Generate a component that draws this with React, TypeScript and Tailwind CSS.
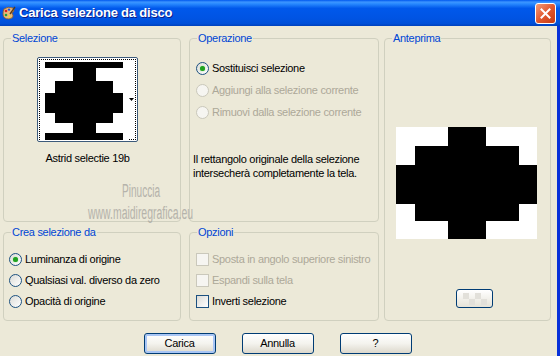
import React from 'react';

interface OptionProps {
  label: string;
  checked?: boolean;
  disabled?: boolean;
}

const Radio: React.FC<OptionProps> = ({ label, checked, disabled }) => (
  <div className="flex h-[21px] items-center gap-[3px] whitespace-nowrap">
    <span
      className={
        disabled
          ? 'flex h-[13px] w-[13px] shrink-0 items-center justify-center rounded-full border border-[#CAC8BB] bg-[#F6F5F1]'
          : 'flex h-[13px] w-[13px] shrink-0 items-center justify-center rounded-full border border-[#1C5180] bg-linear-to-br from-[#DCDCD7] to-white'
      }
    >
      {checked && <span className="h-[5px] w-[5px] rounded-full bg-[#21A121] shadow-[0_0_1px_#55D555]" />}
    </span>
    <span className={disabled ? 'text-[#ACA899]' : 'text-black'}>{label}</span>
  </div>
);

const Check: React.FC<OptionProps> = ({ label, disabled }) => (
  <div className="flex h-[21px] items-center gap-[3px] whitespace-nowrap">
    <span
      className={
        disabled
          ? 'h-[13px] w-[13px] shrink-0 border border-[#CAC8BB] bg-[#F6F5F1]'
          : 'h-[13px] w-[13px] shrink-0 border border-[#1C5180] bg-linear-to-br from-[#DCDCD7] to-white'
      }
    />
    <span className={disabled ? 'text-[#ACA899]' : 'text-black'}>{label}</span>
  </div>
);

const Group: React.FC<{ title: string; className?: string; children?: React.ReactNode }> = ({
  title,
  className = '',
  children,
}) => (
  <fieldset className={`min-w-0 rounded-[4px] border border-[#D0D0BF] ${className}`}>
    <legend className="ml-[7px] px-[1px] text-[11px] leading-[13px] text-[#0046D5]">{title}</legend>
    {children}
  </fieldset>
);

const XpButton: React.FC<{ label: string; focused?: boolean }> = ({ label, focused }) => (
  <button
    className={`h-[21px] w-[72px] rounded-[3px] border border-[#003C74] bg-linear-to-b from-white via-[#F4F3EE] to-[#DCD8CC] text-[11px] text-black ${
      focused ? 'shadow-[inset_0_0_0_2px_#A9C6F5]' : ''
    }`}
  >
    {label}
  </button>
);

export default function App() {
  return (
    <div className="h-[356px] w-[560px] overflow-hidden font-['Liberation_Sans',Arial,sans-serif] text-[11px] leading-[13px] tracking-[-0.3px]">
      {/* barra del titolo */}
      <div className="flex h-[26px] bg-[linear-gradient(to_bottom,#0058EE_0%,#3D95FF_8%,#2A8BFF_14%,#0058EB_32%,#0054E3_70%,#0050D9_90%,#0041BC_100%)]">
        <svg className="ml-[2px] mt-[6px] h-[14px] w-[14px]" viewBox="0 0 14 14">
          <path d="M2 3 Q6 0 11 2 Q13 4 11 6 Q9 7 11 9 Q12 12 7 13 Q1 13 1 8 Q1 5 2 3Z" fill="#E8B878" stroke="#8A5A2A" strokeWidth="0.8" />
          <circle cx="4" cy="5" r="1.3" fill="#E02020" />
          <circle cx="7" cy="3.6" r="1.2" fill="#2050E0" />
          <circle cx="4" cy="9" r="1.3" fill="#20A040" />
          <circle cx="7.5" cy="10.5" r="1.1" fill="#F0E020" />
          <path d="M13 1 L8 8" stroke="#5A3A1A" strokeWidth="1.3" />
        </svg>
        <span className="ml-[3px] mt-[6px] text-[13px] font-bold leading-[14px] tracking-[-0.2px] text-white [text-shadow:1px_1px_0_#0A1E8C]">
          Carica selezione da disco
        </span>
        <div className="ml-auto mr-[4px] mt-[3px] flex h-[21px] w-[21px] items-center justify-center rounded-[3px] border border-white bg-linear-to-br from-[#F09A78] via-[#E2582E] to-[#C43A12]">
          <svg className="h-[11px] w-[11px]" viewBox="0 0 11 11">
            <path d="M1.5 1.5 L9.5 9.5 M9.5 1.5 L1.5 9.5" stroke="white" strokeWidth="2" strokeLinecap="square" />
          </svg>
        </div>
      </div>

      {/* corpo */}
      <div className="relative flex h-[330px] flex-col border-r-[3px] border-[#0831D9] bg-[#ECE9D8]">
        <div className="flex pl-[3px] pt-[6px]">
          <div className="flex w-[178px] flex-col gap-[4px]">
            <Group title="Selezione" className="h-[190px]">
              <div className="ml-[33px] mt-[12px] flex w-[101px] flex-col items-center">
                <div className="h-[85px] w-[101px] rounded-[2px] border border-[#3C5A7A] bg-white p-[1px]">
                  <div className="flex h-full w-full border border-dotted border-black">
                    <svg className="h-[81px] w-[88px]" viewBox="0 0 88 81">
                      <rect width="88" height="81" fill="white" />
                      <rect x="5" y="2" width="78" height="6" fill="black" />
                      <rect x="33" y="8" width="23" height="65" fill="black" />
                      <rect x="15" y="21" width="58" height="42" fill="black" />
                      <rect x="5" y="33" width="78" height="20" fill="black" />
                      <rect x="5" y="73" width="78" height="7" fill="black" />
                    </svg>
                    <div className="flex flex-1 items-center justify-end pr-[1px]">
                      <svg className="h-[3px] w-[5px]" viewBox="0 0 5 3">
                        <path d="M0 0 H5 L2.5 3Z" fill="black" />
                      </svg>
                    </div>
                  </div>
                </div>
                <span className="mt-[10px] whitespace-nowrap">Astrid selectie 19b</span>
              </div>
            </Group>
            <Group title="Crea selezione da" className="h-[95px]">
              <div className="mt-[10px] flex flex-col pl-[5px]">
                <Radio label="Luminanza di origine" checked />
                <Radio label="Qualsiasi val. diverso da zero" />
                <Radio label="Opacità di origine" />
              </div>
            </Group>
          </div>

          <div className="ml-[8px] flex w-[190px] flex-col gap-[4px]">
            <Group title="Operazione" className="h-[190px]">
              <div className="mt-[13px] flex flex-col gap-px pl-[6px]">
                <Radio label="Sostituisci selezione" checked />
                <Radio label="Aggiungi alla selezione corrente" disabled />
                <Radio label="Rimuovi dalla selezione corrente" disabled />
              </div>
              <p className="mt-[29px] whitespace-nowrap pl-[3px] leading-[14px]">
                Il rettangolo originale della selezione
                <br />
                intersecherà completamente la tela.
              </p>
            </Group>
            <Group title="Opzioni" className="h-[95px]">
              <div className="mt-[10px] flex flex-col pl-[6px]">
                <Check label="Sposta in angolo superiore sinistro" disabled />
                <Check label="Espandi sulla tela" disabled />
                <Check label="Inverti selezione" />
              </div>
            </Group>
          </div>

          <Group title="Anteprima" className="ml-[5px] h-[289px] w-[167px]">
            <svg className="ml-[11px] mt-[82px] block h-[112px] w-[141px]" viewBox="0 0 141 112">
              <rect width="141" height="112" fill="white" />
              <rect x="52" y="0" width="38" height="112" fill="black" />
              <rect x="19" y="19" width="104" height="75" fill="black" />
              <rect x="0" y="38" width="141" height="39" fill="black" />
            </svg>
            <button className="ml-[71px] mt-[50px] flex h-[19px] w-[37px] items-center justify-center rounded-[3px] border border-[#003C74] bg-linear-to-b from-white to-[#E6E3D8]">
              <svg className="h-[12px] w-[24px]" viewBox="0 0 24 12">
                <rect x="0" y="0" width="6" height="6" fill="#E2E0DA" />
                <rect x="12" y="0" width="6" height="6" fill="#E2E0DA" />
                <rect x="6" y="6" width="6" height="6" fill="#E2E0DA" />
                <rect x="18" y="6" width="6" height="6" fill="#E2E0DA" />
              </svg>
            </button>
          </Group>
        </div>

        <div className="mt-[12px] flex justify-center gap-[26px] pr-[2px]">
          <XpButton label="Carica" focused />
          <XpButton label="Annulla" />
          <XpButton label="?" />
        </div>

        {/* filigrana */}
        <div className="pointer-events-none absolute left-[122px] top-[155px] origin-left scale-x-[0.56] text-[18px] leading-[20px] tracking-normal text-[#A8A6A0] opacity-80">
          Pinuccia
        </div>
        <div className="pointer-events-none absolute left-[88px] top-[177px] origin-left scale-x-[0.58] text-[18px] leading-[20px] tracking-normal text-[#A8A6A0] opacity-80">
          www.maidiregrafica.eu
        </div>
      </div>
    </div>
  );
}
